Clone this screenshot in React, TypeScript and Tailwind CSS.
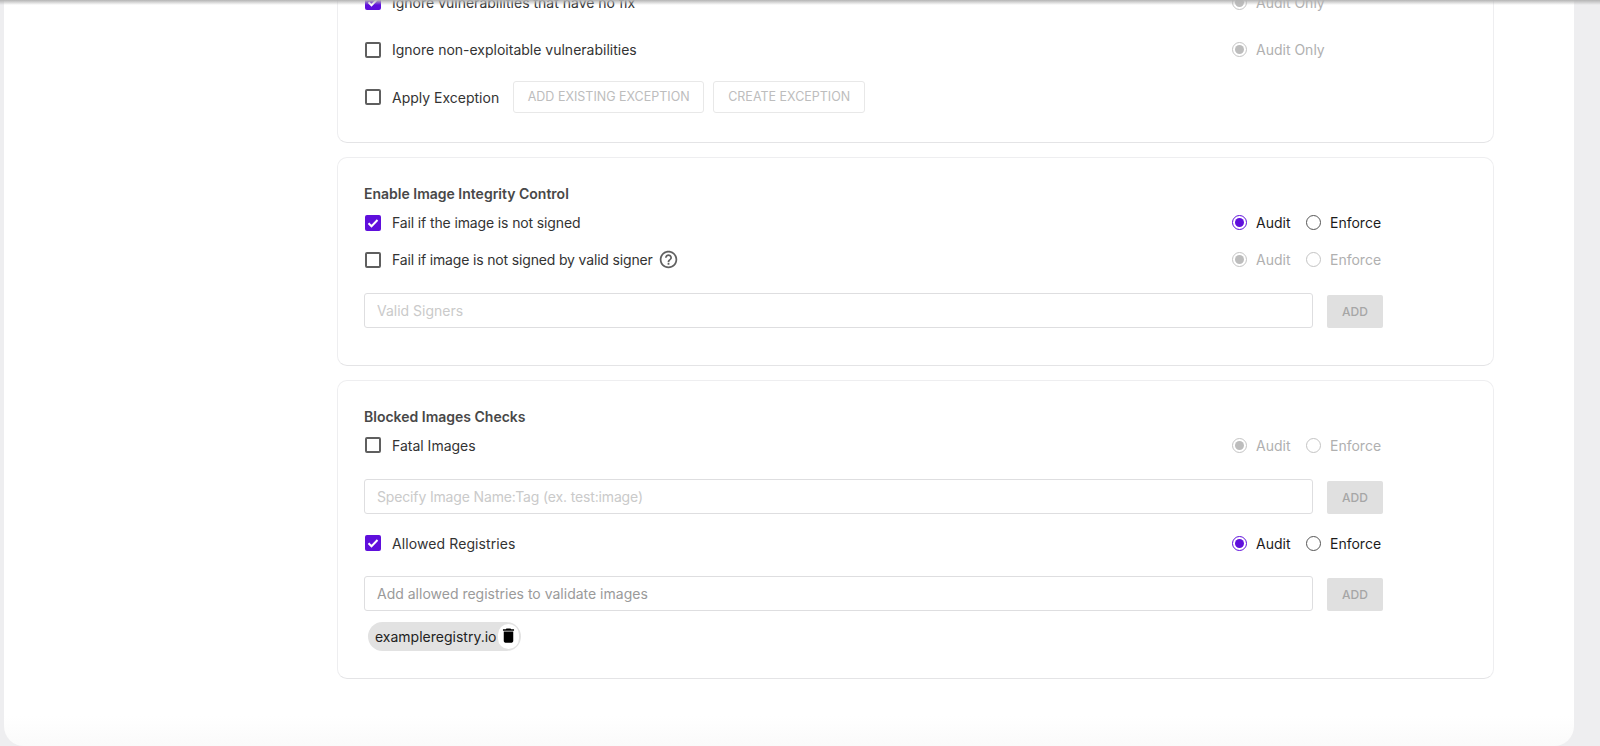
import React from 'react';

const FONT = "font-['Inter','Liberation_Sans',sans-serif]";

const Checkbox = ({ checked = false }: { checked?: boolean }) =>
  checked ? (
    <span className="ml-px flex h-4 w-4 shrink-0 items-center justify-center rounded-[2px] bg-[#5f0fdc]">
      <svg viewBox="0 0 16 16" className="h-4 w-4" fill="none" stroke="#ffffff" strokeWidth="2">
        <path d="M3.5 8.2l3 3 6-6.2" />
      </svg>
    </span>
  ) : (
    <span className="ml-px h-4 w-4 shrink-0 rounded-[2px] border-2 border-[#5f5f5f] bg-white" />
  );

const Radio = ({ on = false, disabled = false, label }: { on?: boolean; disabled?: boolean; label: string }) => {
  const ring = disabled ? 'border-[#c4c4c4]' : on ? 'border-[#5f0fdc]' : 'border-[#555555]';
  const dot = disabled ? 'bg-[#bdbdbd]' : 'bg-[#5f0fdc]';
  return (
    <span className="flex items-center gap-[9px]">
      <span className={`flex h-[15px] w-[15px] shrink-0 items-center justify-center rounded-full border-[1.5px] ${ring}`}>
        {on && <span className={`h-[9px] w-[9px] rounded-full ${dot}`} />}
      </span>
      <span className={`text-[14px] ${disabled ? 'text-[#b0b0b0]' : 'text-[#1c1c1c]'}`}>{label}</span>
    </span>
  );
};

const AuditEnforce = ({ disabled = false }: { disabled?: boolean }) => (
  <div className="flex w-[151px] shrink-0 items-center">
    <div className="w-[74px]">
      <Radio on disabled={disabled} label="Audit" />
    </div>
    <Radio disabled={disabled} label="Enforce" />
  </div>
);

const AuditOnly = () => (
  <div className="flex w-[151px] shrink-0 items-center">
    <Radio on disabled label="Audit Only" />
  </div>
);

const Label = ({ children, className = '' }: { children: React.ReactNode; className?: string }) => (
  <span className={`ml-[11px] text-[14px] text-[#333333] ${className}`}>{children}</span>
);

const AddInput = ({ placeholder, className = 'placeholder:text-[#cacaca]' }: { placeholder: string; className?: string }) => (
  <div className="flex h-[35px] items-end justify-between">
    <input
      placeholder={placeholder}
      className={`h-[35px] w-[949px] rounded-[3px] border border-[#dedee0] bg-white px-3 text-[14px] outline-none ${className}`}
    />
    <button className="h-[33px] w-[56px] rounded-[2px] bg-[#e0e0e0] text-[12px] font-medium text-[#a6a6a6]">ADD</button>
  </div>
);

const OutlineButton = ({ children, width }: { children: React.ReactNode; width: string }) => (
  <button className={`h-[32px] ${width} rounded-[3px] border border-[#e8e8e8] bg-white text-[12.5px] font-normal text-[#bdbdbd]`}>
    {children}
  </button>
);

const App = () => {
  return (
    <div className={`${FONT} relative h-[746px] overflow-hidden bg-[#eeeef0] pl-[4px] pr-[26px]`}>
      <div className="absolute inset-x-0 top-0 z-10 h-[5px] bg-gradient-to-b from-[#b4b4b4] to-transparent" />
      <div className="flex h-full flex-col rounded-b-[20px] bg-gradient-to-b from-white from-[96%] to-[#fafafa] pl-[333px] pr-[80px]">
        {/* policy checks, scrolled past the top */}
        <div className="-mt-[48px] flex h-[191px] flex-col rounded-[10px] border border-[#eeeef0] border-b-[#e4e4e6] pl-[26px] pr-[110px] pt-[25px]">
          <div className="flex h-[48px] items-center justify-between">
            <div className="flex items-center">
              <Checkbox checked />
              <Label>Ignore vulnerabilities that have no fix</Label>
            </div>
            <AuditOnly />
          </div>
          <div className="flex h-[47px] items-center justify-between">
            <div className="flex items-center">
              <Checkbox />
              <Label>Ignore non-exploitable vulnerabilities</Label>
            </div>
            <AuditOnly />
          </div>
          <div className="flex h-[48px] items-center">
            <Checkbox />
            <Label>Apply Exception</Label>
            <div className="ml-[14px] flex gap-[9px]">
              <OutlineButton width="w-[191px]">ADD EXISTING EXCEPTION</OutlineButton>
              <OutlineButton width="w-[152px]">CREATE EXCEPTION</OutlineButton>
            </div>
          </div>
        </div>

        <div className="mt-[14px] flex h-[209px] flex-col rounded-[10px] border border-[#eeeef0] border-b-[#e4e4e6] pl-[26px] pr-[110px] pt-[26px]">
          <div className="h-[20px] text-[14px] leading-[20px] font-semibold text-[#484848]">Enable Image Integrity Control</div>
          <div className="flex h-[37px] items-center justify-between">
            <div className="flex items-center">
              <Checkbox checked />
              <Label className="tracking-[-0.13px]">Fail if the image is not signed</Label>
            </div>
            <AuditEnforce />
          </div>
          <div className="flex h-[37px] items-center justify-between">
            <div className="flex items-center">
              <Checkbox />
              <Label className="tracking-[-0.16px]">Fail if image is not signed by valid signer</Label>
              <svg viewBox="0 0 24 24" className="ml-[5px] h-[21px] w-[21px]" fill="#616161">
                <path d="M11 18h2v-2h-2v2zm1-16C6.48 2 2 6.48 2 12s4.48 10 10 10 10-4.48 10-10S17.52 2 12 2zm0 18c-4.41 0-8-3.59-8-8s3.59-8 8-8 8 3.59 8 8-3.59 8-8 8zm0-14c-2.21 0-4 1.79-4 4h2c0-1.1.9-2 2-2s2 .9 2 2c0 2-3 1.75-3 5h2c0-2.25 3-2.5 3-5 0-2.21-1.79-4-4-4z" />
              </svg>
            </div>
            <AuditEnforce disabled />
          </div>
          <div className="mt-[15px]">
            <AddInput placeholder="Valid Signers" />
          </div>
        </div>

        <div className="mt-[14px] flex h-[299px] flex-col rounded-[10px] border border-[#eeeef0] border-b-[#e4e4e6] pl-[26px] pr-[110px] pt-[26px]">
          <div className="h-[20px] text-[14px] leading-[20px] font-semibold text-[#484848]">Blocked Images Checks</div>
          <div className="mt-[8px] flex h-[20px] items-center justify-between">
            <div className="flex items-center">
              <Checkbox />
              <Label>Fatal Images</Label>
            </div>
            <AuditEnforce disabled />
          </div>
          <div className="mt-[24px]">
            <AddInput placeholder="Specify Image Name:Tag (ex. test:image)" className="tracking-[-0.15px] placeholder:text-[#cacaca]" />
          </div>
          <div className="mt-[19px] flex h-[20px] items-center justify-between">
            <div className="flex items-center">
              <Checkbox checked />
              <Label className="tracking-[0.1px]">Allowed Registries</Label>
            </div>
            <AuditEnforce />
          </div>
          <div className="mt-[23px]">
            <AddInput placeholder="Add allowed registries to validate images" className="placeholder:text-[#9a9a9a]" />
          </div>
          <div className="ml-[4px] mt-[11px] flex h-[29px] w-[153px] items-center justify-between rounded-full bg-[#e2e2e2] pl-[7px] pr-[2px]">
            <span className="text-[14px] text-[#222222]">exampleregistry.io</span>
            <span className="flex h-[25px] w-[21px] items-center justify-center rounded-full bg-white">
              <svg viewBox="0 0 24 24" className="-mt-[3px] h-[19px] w-[19px]" fill="#000000">
                <path d="M6 19c0 1.1.9 2 2 2h8c1.1 0 2-.9 2-2V7H6v12zM19 4h-3.5l-1-1h-5l-1 1H5v2h14V4z" />
              </svg>
            </span>
          </div>
        </div>
      </div>
    </div>
  );
};

export default App;
